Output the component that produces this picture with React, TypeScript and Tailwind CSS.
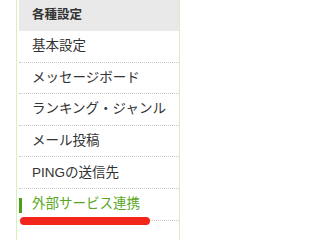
const items = [
  { label: '基本設定' },
  { label: 'メッセージボード' },
  { label: 'ランキング・ジャンル' },
  { label: 'メール投稿' },
  { label: 'PINGの送信先' },
  { label: '外部サービス連携', active: true },
]

export default function App() {
  return (
    <div className="w-[200px] h-[240px] bg-white overflow-hidden font-['Liberation_Sans','Noto_Sans_CJK_JP',sans-serif]">
      <div className="ml-[16px] w-[164px] h-full border-x border-[#d9efbd] pl-[2px]">
        {/* 見出し */}
        <div className="h-[31px] flex items-center pl-[13px] bg-[#e9e9e9] text-[12.5px] font-bold text-[#333]">
          各種設定
        </div>
        {items.map((item) => (
          <div
            key={item.label}
            className="relative h-[31.6px] flex items-center pl-[13px] border-b border-dotted border-[#c9c9c9] text-[13.5px]"
          >
            {item.active && (
              <span className="absolute left-0 top-[9px] w-[3px] h-[15px] bg-[#4d9e1a]" />
            )}
            <span className={item.active ? 'text-[#5aa723]' : 'text-[#333]'}>{item.label}</span>
            {item.active && (
              <span className="absolute left-[1px] bottom-[-5px] w-[130px] h-[8px] rounded-full bg-[#f3261c]" />
            )}
          </div>
        ))}
      </div>
    </div>
  )
}
